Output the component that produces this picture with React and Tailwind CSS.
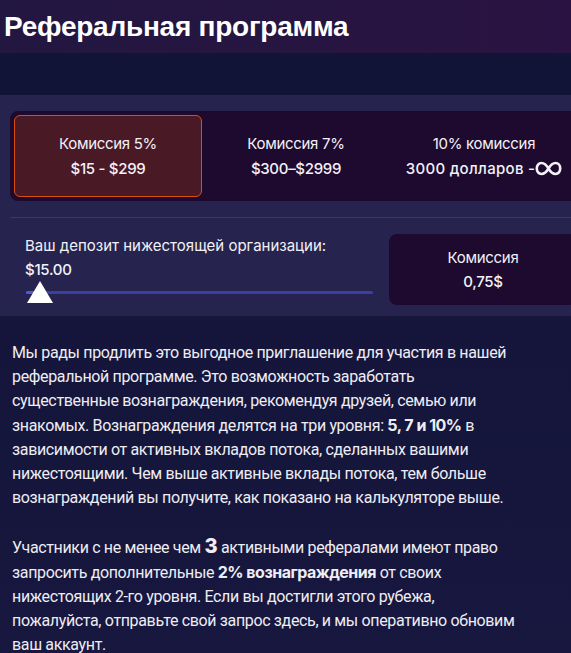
import React from 'react';

const tiers = [
  { title: 'Комиссия 5%', range: '$15 - $299', active: true },
  { title: 'Комиссия 7%', range: '$300–$2999' },
  { title: '10% комиссия', range: '3000 долларов -', infinite: true },
];

function Infinity() {
  return (
    <svg width="27" height="15" viewBox="0 0 27 15" className="inline-block align-[-2px]">
      <path
        d="M13.5 7.5C11 3.2 8.8 2 6.5 2 3.6 2 1.8 4.3 1.8 7.5s1.8 5.5 4.7 5.5c2.3 0 4.5-1.2 7-5.5 2.5-4.3 4.7-5.5 7-5.5 2.9 0 4.7 2.3 4.7 5.5s-1.8 5.5-4.7 5.5c-2.3 0-4.5-1.2-7-5.5z"
        fill="none"
        stroke="#f4f2f8"
        strokeWidth="2.6"
      />
    </svg>
  );
}

export default function App() {
  return (
    <div className="w-[571px] h-[653px] overflow-hidden bg-gradient-to-b from-[#131437] to-[#17173f] font-['Roboto',sans-serif]">
      {/* Header */}
      <div className="h-[53px] flex items-center px-1 bg-gradient-to-r from-[#221740] to-[#2a1342]">
        <h1 className="text-[28px] font-bold text-white tracking-[-0.25px] font-['Liberation_Sans',sans-serif]">Реферальная программа</h1>
      </div>
      <div className="h-[42px] bg-[#121437]" />

      {/* Calculator */}
      <div className="w-[592px] bg-[#26244f] px-[10px] pt-4 pb-[11px] font-['Inter',sans-serif] text-[#f3f1f7]">
        <div className="grid grid-cols-3 h-[90px] p-1 rounded-lg bg-[#1d0a2e]">
          {tiers.map((t, i) => (
            <div
              key={i}
              className={`flex flex-col items-center justify-center text-[15px] leading-[25px] tracking-[-0.3px] rounded-md ${t.active ? 'bg-[#4a1926] border border-[#d9500f]' : ''}`}
            >
              <span>{t.title}</span>
              <span className={`font-medium ${t.infinite ? 'tracking-[0.3px]' : ''}`}>
                {t.range}
                {t.infinite && <Infinity />}
              </span>
            </div>
          ))}
        </div>

        <div className="h-px bg-[#3a3864] mt-4" />

        <div className="flex items-start gap-4 mt-4">
          <div className="w-[348px] ml-[15px] text-[15px] leading-[24px]">
            <div>Ваш депозит нижестоящей организации:</div>
            <div className="font-medium tracking-[-0.3px]">$15.00</div>
            <div className="relative h-[22px] -mt-[1px]">
              <div className="absolute left-[1px] right-0 top-[10px] h-[3px] rounded-full bg-[#3b3f9f]" />
              <div className="absolute left-[1px] w-[14px] top-[10px] h-[3px] rounded-full bg-[#4f5bd6]" />
              <div className="absolute left-[2px] top-0 w-0 h-0 border-l-[13px] border-r-[13px] border-b-[22px] border-l-transparent border-r-transparent border-b-white" />
            </div>
          </div>
          <div className="w-[188px] h-[71px] rounded-lg bg-[#1d0a2e] flex flex-col items-center justify-center text-[15px] leading-[24px] tracking-[-0.3px] pt-[1px]">
            <span>Комиссия</span>
            <span className="font-medium">0,75$</span>
          </div>
        </div>
      </div>

      {/* Description */}
      <div className="px-3 pt-[25px] text-[16px] leading-[24px] text-[#eeedf3] tracking-[-0.35px]">
        <p>
          Мы рады продлить это выгодное приглашение для участия в нашей<br />
          реферальной программе. Это возможность заработать<br />
          существенные вознаграждения, рекомендуя друзей, семью или<br />
          знакомых. Вознаграждения делятся на три уровня: <b className="font-['Inter',sans-serif] font-bold tracking-[-0.5px]">5, 7 и 10%</b> в<br />
          зависимости от активных вкладов потока, сделанных вашими<br />
          нижестоящими. Чем выше активные вклады потока, тем больше<br />
          вознаграждений вы получите, как показано на калькуляторе выше.
        </p>
        <p className="mt-[26px]">
          Участники с не менее чем <b className="font-['Inter',sans-serif] font-extrabold text-[20px] leading-none">3</b> активными рефералами имеют право<br />
          запросить дополнительные <b className="font-['Inter',sans-serif] font-bold tracking-[-0.5px]">2% вознаграждения</b> от своих<br />
          нижестоящих 2-го уровня. Если вы достигли этого рубежа,<br />
          пожалуйста, отправьте свой запрос здесь, и мы оперативно обновим<br />
          ваш аккаунт.
        </p>
      </div>
    </div>
  );
}
